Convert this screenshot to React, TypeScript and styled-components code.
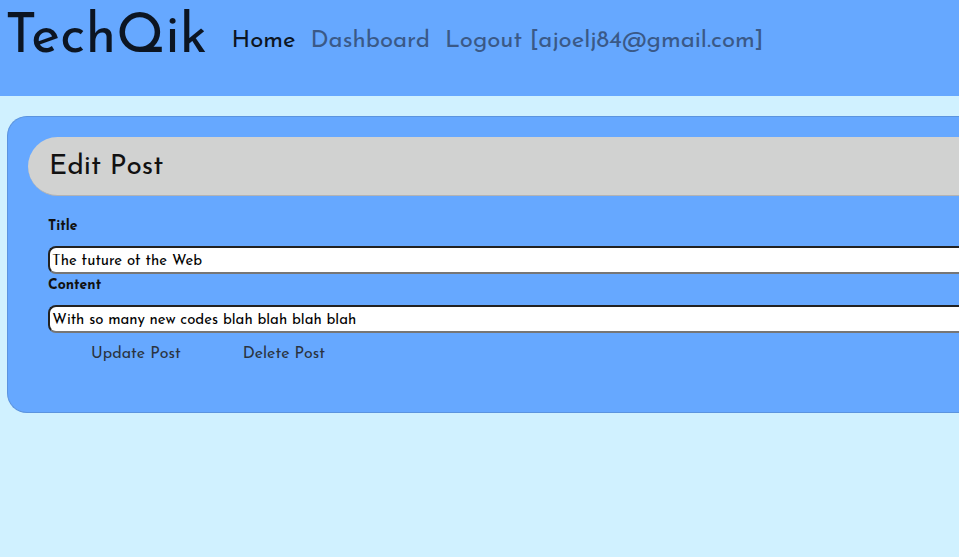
import React from "react";
import styled, { createGlobalStyle } from "styled-components";

const Global = createGlobalStyle`
  html, body {
    margin: 0;
    padding: 0;
    background: #d0f1ff;
    overflow: hidden;
    font-family: "Josefin Sans", Lato, "Noto Sans", sans-serif;
  }
`;

const Header = styled.header`
  background: #66a8ff;
  height: 96px;
  display: flex;
  align-items: flex-start;
  padding: 0 0 0 5px;
  box-sizing: border-box;
`;

const Logo = styled.h1`
  margin: 0;
  padding-top: 6px;
  font-size: 55px;
  font-weight: 400;
  color: #0c1522;
  line-height: 66px;
  letter-spacing: 0.3px;
`;

const Nav = styled.nav`
  display: flex;
  gap: 15px;
  margin-left: 24px;
  padding-top: 26px;
`;

const NavLink = styled.a<{ $active?: boolean }>`
  font-size: 24px;
  line-height: 30px;
  color: ${(p) => (p.$active ? "#0c1522" : "#3a5987")};
  text-decoration: none;
  cursor: pointer;
`;

const Main = styled.main`
  padding: 20px 0 0 7px;
`;

const Card = styled.section`
  background: #66a8ff;
  border: 1px solid #5b94df;
  border-right: none;
  border-radius: 20px 0 0 20px;
  padding: 20px 0 50px 20px;
  box-sizing: border-box;
`;

const TitleBar = styled.div`
  background: #d1d2d1;
  border-bottom: 1px solid #b3b3b3;
  border-radius: 30px 0 0 30px;
  height: 58px;
  display: flex;
  align-items: center;
  padding-left: 21px;
`;

const Heading = styled.h2`
  margin: 0;
  font-size: 28px;
  font-weight: 400;
  color: #111;
  padding-top: 2px;
`;

const Form = styled.form`
  padding: 22px 0 0 20px;
  display: flex;
  flex-direction: column;
`;

const Label = styled.label`
  font-size: 14px;
  font-weight: 700;
  color: #111;
  line-height: 18px;
  margin-bottom: 10px;
`;

const Input = styled.input`
  box-sizing: border-box;
  height: 28px;
  width: 100%;
  border: 2px solid #767676;
  border-top-color: #222;
  border-left-color: #222;
  border-right: none;
  border-radius: 8px 0 0 8px;
  background: #fff;
  font-family: inherit;
  font-size: 15px;
  font-weight: 400;
  color: #000;
  padding: 2px 2px 0;
  margin: 0 0 3px;
  outline: none;
`;

const Actions = styled.div`
  display: flex;
  gap: 62px;
  padding-left: 43px;
  margin-top: 10px;
`;

const ActionButton = styled.button`
  background: none;
  border: none;
  padding: 0;
  font-family: inherit;
  font-size: 16px;
  color: #2a3340;
  cursor: pointer;
`;

export default function App() {
  return (
    <>
      <Global />
      <Header>
        <Logo>TechQik</Logo>
        <Nav>
          <NavLink $active>Home</NavLink>
          <NavLink>Dashboard</NavLink>
          <NavLink>Logout [ajoelj84@gmail.com]</NavLink>
        </Nav>
      </Header>
      <Main>
        <Card>
          <TitleBar>
            <Heading>Edit Post</Heading>
          </TitleBar>
          <Form onSubmit={(e) => e.preventDefault()}>
            <Label htmlFor="title">Title</Label>
            <Input id="title" defaultValue="The future of the Web" />
            <Label htmlFor="content">Content</Label>
            <Input id="content" defaultValue="With so many new codes blah blah blah blah" />
            <Actions>
              <ActionButton type="button">Update Post</ActionButton>
              <ActionButton type="button">Delete Post</ActionButton>
            </Actions>
          </Form>
        </Card>
      </Main>
    </>
  );
}
